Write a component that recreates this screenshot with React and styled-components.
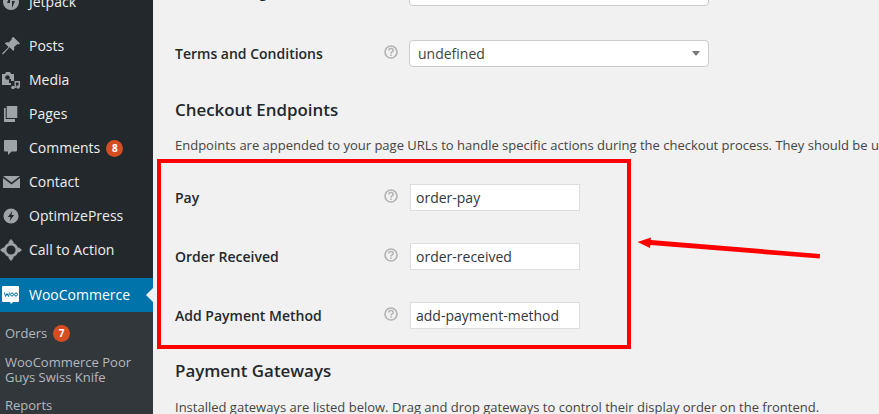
import styled, { createGlobalStyle } from 'styled-components';

const GlobalStyle = createGlobalStyle`
    html, body {
        margin: 0;
        padding: 0;
        overflow: hidden;
        background: #f1f1f1;
    }
    body {
        font-family: "Open Sans", sans-serif;
        font-size: 14px;
        color: #444;
    }
`

const Page = styled.div`
    position: relative;
    display: flex;
    width: 879px;
    height: 414px;
    overflow: hidden;
`
const Sidebar = styled.nav`
    flex: none;
    width: 153px;
    background: #23282d;
`
const Menu = styled.ul`
    list-style: none;
    margin: -15px 0 0;
    padding: 0;
`
const Item = styled.li`
    position: relative;
    display: flex;
    align-items: center;
    height: 34px;
    margin-bottom: ${props => props.$gap || 0}px;
    background: ${props => props.$active ? '#0073aa' : 'transparent'};
    color: ${props => props.$active ? '#fff' : '#eee'};
    line-height: 18px;
`
const IconSlot = styled.span`
    flex: none;
    display: flex;
    justify-content: center;
    align-items: center;
    width: 22px;
    height: 34px;
    margin-right: 7px;
`
const Count = styled.span`
    display: inline-block;
    width: 17px;
    height: 17px;
    margin-left: 6px;
    border-radius: 50%;
    background: #d54e21;
    color: #fff;
    font-size: 10px;
    font-weight: 700;
    line-height: 17px;
    text-align: center;
`
const Notch = styled.span`
    position: absolute;
    right: 0;
    top: 10px;
    border: 7px solid transparent;
    border-left-width: 0;
    border-right-color: #f1f1f1;
`
const Submenu = styled.ul`
    list-style: none;
    margin: 0;
    padding: 13px 0 0 5px;
    background: #32373c;
    color: #b4b9be;
    font-size: 13px;
    line-height: 15px;
`
const SubItem = styled.li`
    display: flex;
    align-items: center;
    padding-bottom: 13px;
`
const Content = styled.main`
    flex: 1;
    min-width: 0;
    padding-left: 22px;
    margin-top: -21px;
`
const Row = styled.div`
    display: flex;
    align-items: center;
    height: 27px;
    padding-bottom: ${props => props.$pad}px;
`
const Label = styled.label`
    flex: none;
    width: 209px;
    color: #23282d;
    font-weight: 600;
    line-height: 18px;
`
const Help = styled.svg`
    flex: none;
    width: 14px;
    height: 14px;
    margin-top: -3px;
    margin-right: ${props => props.$after}px;
`
const Select = styled.div`
    box-sizing: border-box;
    position: relative;
    width: 300px;
    height: 27px;
    padding-left: 8px;
    background: #fff;
    border: 1px solid #ccc;
    border-radius: 4px;
    color: #444;
    line-height: 25px;
`
const Caret = styled.span`
    position: absolute;
    right: 8px;
    top: 10px;
    border: 4px solid transparent;
    border-bottom-width: 0;
    border-top: 5px solid #777;
`
const TextInput = styled.input`
    box-sizing: border-box;
    width: 170px;
    height: 27px;
    padding: 0 5px;
    background: #fff;
    border: 1px solid #ddd;
    color: #32373c;
    font: 14px "Open Sans", sans-serif;
    outline: none;
`
const Heading = styled.h3`
    margin: 0;
    color: #23282d;
    font-size: 16.9px;
    font-weight: 600;
    line-height: 22px;
`
const Description = styled.p`
    margin: ${props => props.$top}px 0 ${props => props.$bottom || 0}px;
    color: #444;
    font-size: 13px;
    line-height: 18px;
    white-space: nowrap;
`
const RedBox = styled.div`
    position: absolute;
    left: 157px;
    top: 159px;
    width: 474px;
    height: 190px;
    box-sizing: border-box;
    border: 4px solid #f00;
    pointer-events: none;
`
const Arrow = styled.svg`
    position: absolute;
    left: 630px;
    top: 230px;
    width: 200px;
    height: 35px;
`

const iconColor = '#9ea3a8';
const helpColor = '#b4b4b4';

function HelpIcon({ after }) {
    return (
        <Help $after={after} viewBox="0 0 14 14">
            <circle cx="7" cy="7" r="6" fill="none" stroke={helpColor} strokeWidth="1.7" />
            <path d="M4.800 5.600c0-1.300 1-2 2.200-2s2.200 .7 2.200 1.800c0 1.600-2.200 1.500-2.200 3" fill="none" stroke={helpColor} strokeWidth="1.5" />
            <rect x="6.200" y="9.400" width="1.600" height="1.500" fill={helpColor} />
        </Help>
    )
}

const icons = {
    jetpack: (
        <svg width="18" height="18" viewBox="0 0 18 18">
            <circle cx="9" cy="9" r="8" fill={iconColor} />
            <path d="M8 3v7H5zM10 8h3l-3 7z" fill="#23282d" />
        </svg>
    ),
    posts: (
        <svg width="20" height="20" viewBox="0 0 20 20">
            <path d="M12.500 1l6.500 6.500-1.400 1-1-.6-3.600 3.200c.6 1.700.2 3-.6 4L8.600 11.300 2 18.500l-1-1 6.600-6.500L3.800 7.200c1-.8 2.500-1.200 4-.6l3.200-3.600-.5-1z" fill={iconColor} />
        </svg>
    ),
    media: (
        <svg width="20" height="20" viewBox="0 0 20 20">
            <path d="M1 4h3l1-2h4l1 2h3v7h-3V9H8v4h2v2H1z" fill={iconColor} />
            <circle cx="6.500" cy="7.500" r="2.300" fill="#23282d" />
            <path d="M13.500 11h5.500v6h-1.400v-4.600h-2.700V18h-1.400z" fill={iconColor} />
            <circle cx="12" cy="17.500" r="1.800" fill={iconColor} />
            <circle cx="17" cy="17" r="1.800" fill={iconColor} />
        </svg>
    ),
    pages: (
        <svg width="20" height="20" viewBox="0 0 20 20">
            <path d="M3 4h1.700v11H14v3H3z" fill={iconColor} />
            <path d="M5.700 2H16.300v12H5.700z" fill={iconColor} />
        </svg>
    ),
    comments: (
        <svg width="20" height="20" viewBox="0 0 20 20">
            <path d="M4 2h11a1 1 0 0 1 1 1v9.500a1 1 0 0 1-1 1H10.500L7 17v-3.500H4a1 1 0 0 1-1-1V3a1 1 0 0 1 1-1z" fill={iconColor} />
        </svg>
    ),
    contact: (
        <svg width="20" height="20" viewBox="0 0 20 20">
            <path d="M2 4h17l-8.500 6.500zM2 6l8.500 6.500L19 6v10H2z" fill={iconColor} />
        </svg>
    ),
    optimize: (
        <svg width="16" height="16" viewBox="0 0 18 18">
            <circle cx="9" cy="9" r="8.500" fill={iconColor} />
            <path d="M10.500 3.500L5.500 10h3l-1 4.500 5-6.500h-3z" fill="#23282d" />
        </svg>
    ),
    action: (
        <svg width="22" height="22" viewBox="0 0 24 24">
            <circle cx="12" cy="12" r="6.500" fill="none" stroke={iconColor} strokeWidth="3" />
            <path d="M12 0l3 3.500-3 3-3-3zM12 24l3-3.500-3-3-3 3zM0 12l3.500-3 3 3-3 3zM24 12l-3.500-3-3 3 3 3z" fill={iconColor} />
        </svg>
    ),
    woo: (
        <svg width="20" height="20" viewBox="0 0 20 20">
            <path d="M2 1h15a1 1 0 0 1 1 1v14a1 1 0 0 1-1 1h-5l-2 2-1-2H2a1 1 0 0 1-1-1V2a1 1 0 0 1 1-1z" fill="#fff" />
            <path d="M3.500 7.500l1 4 1.500-3 1.500 3 1-4" fill="none" stroke="#0073aa" strokeWidth="1" />
            <circle cx="11" cy="9.500" r="1.500" fill="none" stroke="#0073aa" strokeWidth="1" />
            <circle cx="15" cy="9.500" r="1.500" fill="none" stroke="#0073aa" strokeWidth="1" />
        </svg>
    ),
}

const menu = [
    { key: 'jetpack', name: 'Jetpack', gap: 10 },
    { key: 'posts', name: 'Posts' },
    { key: 'media', name: 'Media' },
    { key: 'pages', name: 'Pages' },
    { key: 'comments', name: 'Comments', count: 8 },
    { key: 'contact', name: 'Contact' },
    { key: 'optimize', name: 'OptimizePress' },
    { key: 'action', name: 'Call to Action', gap: 11 },
]

export default function App() {
    return (
        <Page>
            <GlobalStyle />
            <Sidebar>
                <Menu>
                    {menu.map(m => (
                        <Item key={m.key} $gap={m.gap}>
                            <IconSlot>{icons[m.key]}</IconSlot>
                            {m.name}
                            {m.count && <Count>{m.count}</Count>}
                        </Item>
                    ))}
                    <Item $active>
                        <IconSlot>{icons.woo}</IconSlot>
                        WooCommerce
                        <Notch />
                    </Item>
                </Menu>
                <Submenu>
                    <SubItem>Orders<Count>7</Count></SubItem>
                    <SubItem><span>WooCommerce Poor<br />Guys Swiss Knife</span></SubItem>
                    <SubItem>Reports</SubItem>
                </Submenu>
            </Sidebar>
            <Content>
                <Row $pad={34}>
                    <Label>Checkout Page</Label>
                    <HelpIcon after={11} />
                    <Select />
                </Row>
                <Row $pad={32}>
                    <Label>Terms and Conditions</Label>
                    <HelpIcon after={11} />
                    <Select>undefined<Caret /></Select>
                </Row>
                <Heading>Checkout Endpoints</Heading>
                <Description $top={15} $bottom={30}>
                    Endpoints are appended to your page URLs to handle specific actions during the checkout process. They should be unique.
                </Description>
                <Row $pad={32}>
                    <Label>Pay</Label>
                    <HelpIcon after={12} />
                    <TextInput defaultValue="order-pay" />
                </Row>
                <Row $pad={32}>
                    <Label>Order Received</Label>
                    <HelpIcon after={12} />
                    <TextInput defaultValue="order-received" />
                </Row>
                <Row $pad={31}>
                    <Label>Add Payment Method</Label>
                    <HelpIcon after={12} />
                    <TextInput defaultValue="add-payment-method" />
                </Row>
                <Heading>Payment Gateways</Heading>
                <Description $top={16}>
                    Installed gateways are listed below. Drag and drop gateways to control their display order on the frontend.
                </Description>
            </Content>
            <RedBox />
            <Arrow viewBox="0 0 200 35">
                <path d="M7.500 12L21 7.500 20.700 10 190 24 189.700 28.500 20.400 15 20 18z" fill="#f00" />
            </Arrow>
        </Page>
    )
}
